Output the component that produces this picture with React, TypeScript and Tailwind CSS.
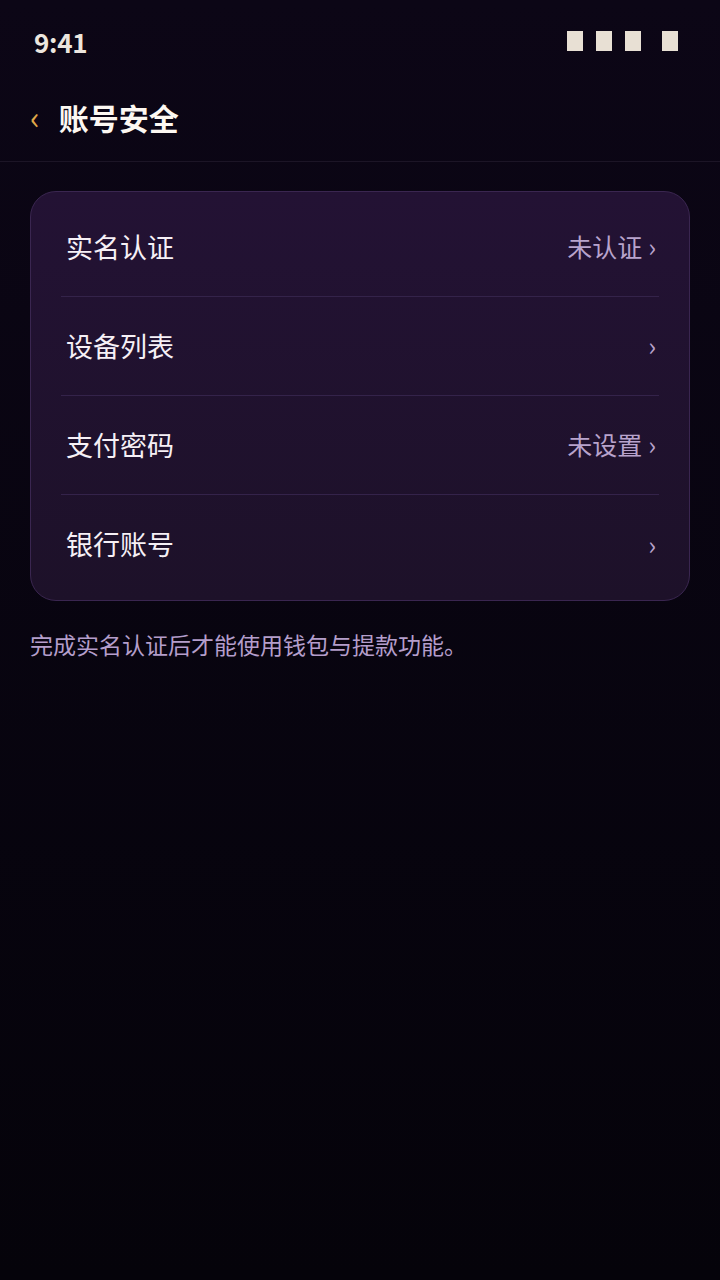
import React from 'react';

const rows = [
  { label: '实名认证', value: '未认证' },
  { label: '设备列表', value: '' },
  { label: '支付密码', value: '未设置' },
  { label: '银行账号', value: '' },
];

export default function App() {
  return (
    <div
      className="w-[720px] h-[1280px] flex flex-col bg-gradient-to-b from-[#0c0616] to-[#05030a] text-white"
      style={{ fontFamily: '"Noto Sans CJK SC", "Noto Sans", sans-serif' }}
    >
      {/* status bar */}
      <div className="h-[86px] flex items-center justify-between pl-[34px] pr-[42px] pb-[4px]">
        <span className="text-[26px] font-bold text-[#ece6de] tracking-[-0.3px]">9:41</span>
        <div className="flex items-center">
          <div className="w-[16px] h-[20px] bg-[#e8e0d4]" />
          <div className="w-[16px] h-[20px] bg-[#e8e0d4] ml-[13px]" />
          <div className="w-[16px] h-[20px] bg-[#e8e0d4] ml-[13px]" />
          <div className="w-[16px] h-[20px] bg-[#e8e0d4] ml-[21px]" />
        </div>
      </div>

      {/* header */}
      <div className="h-[76px] flex items-center pl-[30px] border-b border-[#1c1526] pb-[14px]">
        <span className="text-[32px] text-[#e0a94a] leading-none mr-[19px] -mt-[2px]">‹</span>
        <h1 className="text-[30px] font-bold text-[#fdf8f2] leading-none">账号安全</h1>
      </div>

      <div className="px-[30px] pt-[29px]">
        <div className="rounded-[26px] border border-[#3a2650] bg-gradient-to-b from-[#231234] to-[#1d1129] px-[30px] py-[6px]">
          {rows.map((r, i) => (
            <div
              key={r.label}
              className={`h-[99px] flex items-center justify-between pl-[5px] pr-[3px] ${
                i < rows.length - 1 ? 'border-b border-[#34234a]' : ''
              }`}
            >
              <span className="text-[27px] text-[#f6f0f6]">{r.label}</span>
              <span className="flex items-center text-[25px] text-[#b8a3cc]">
                {r.value}
                <span className="ml-[6px] text-[26px] leading-none -mt-[2px] text-[#b8a3cc]">›</span>
              </span>
            </div>
          ))}
        </div>
        <p className="mt-[26px] text-[23px] text-[#b49ecb]">完成实名认证后才能使用钱包与提款功能。</p>
      </div>
    </div>
  );
}
